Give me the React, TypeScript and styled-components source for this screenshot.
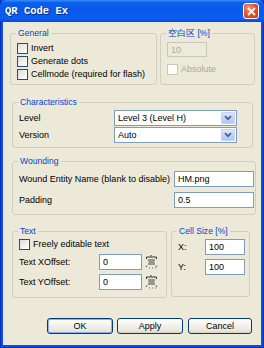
import React from 'react'
import styled, { createGlobalStyle, css } from 'styled-components'

const GlobalStyle = createGlobalStyle`
  html, body {
    margin: 0;
    padding: 0;
    background: #ffffff;
  }
  * {
    box-sizing: border-box;
  }
`

const uiFont = `"Liberation Sans", Arial, sans-serif`

const Window = styled.div`
  width: 264px;
  height: 348px;
  display: flex;
  flex-direction: column;
  background: #0a4ee4;
  border: 1px solid #0831b8;
  border-top: none;
  padding: 0 2px 2px;
  font-family: ${uiFont};
  font-size: 9px;
  color: #000;
`

const TitleBar = styled.div`
  height: 22px;
  margin: 0 -3px;
  padding: 0 5px;
  display: flex;
  align-items: center;
  justify-content: space-between;
  background: linear-gradient(
    180deg,
    #3c8cf8 0%,
    #0a5fee 12%,
    #0a58e8 45%,
    #0b5ef2 85%,
    #0848d8 100%
  );
  border-radius: 6px 6px 0 0;
`

const Title = styled.span`
  font-family: "Liberation Mono", "DejaVu Sans Mono", monospace;
  font-weight: bold;
  font-size: 10.5px;
  color: #ffffff;
  text-shadow: 1px 1px 0 #0a2a8a;
`

const CloseButton = styled.div`
  width: 16px;
  height: 16px;
  border: 1px solid #ffffff;
  border-radius: 3px;
  background: radial-gradient(circle at 35% 30%, #f39a7c 0%, #e2562f 45%, #c63a12 100%);
  display: flex;
  align-items: center;
  justify-content: center;
`

const Body = styled.div`
  flex: 1;
  background: #ece9d8;
  display: flex;
  flex-direction: column;
`

const Row = styled.div<{ $top: number; $left?: number }>`
  display: flex;
  margin-top: ${(p) => p.$top}px;
  margin-left: ${(p) => p.$left ?? 0}px;
`

const Group = styled.fieldset<{ $w: number; $h: number; $ml?: number }>`
  width: ${(p) => p.$w}px;
  height: ${(p) => p.$h}px;
  margin: 0 0 0 ${(p) => p.$ml ?? 0}px;
  padding: 0 0 0 6px;
  border: 1px solid #d0d0bf;
  border-radius: 3px;
  min-width: 0;
`

const Legend = styled.legend`
  padding: 0 2px;
  margin-left: -1px;
  color: #0046d5;
  line-height: 12px;
  font-size: 8.6px;
`

const Stack = styled.div<{ $pt: number; $gap: number }>`
  display: flex;
  flex-direction: column;
  padding-top: ${(p) => p.$pt}px;
  gap: ${(p) => p.$gap}px;
`

const CheckRow = styled.label<{ $disabled?: boolean }>`
  display: flex;
  align-items: center;
  height: 12px;
  gap: 3px;
  color: ${(p) => (p.$disabled ? '#aca899' : '#000')};
  white-space: nowrap;
`

const CheckBox = styled.span<{ $disabled?: boolean }>`
  width: 11px;
  height: 11px;
  flex: none;
  ${(p) =>
    p.$disabled
      ? css`
          border: 1px solid #cac8bb;
          background: #ffffff;
        `
      : css`
          border: 1px solid #1c5180;
          background: linear-gradient(135deg, #dcdcd7 0%, #f2f2ee 60%, #ffffff 100%);
        `}
`

const FieldRow = styled.div`
  display: flex;
  align-items: center;
  height: 16px;
`

const FieldLabel = styled.span<{ $w: number }>`
  width: ${(p) => p.$w}px;
  flex: none;
  white-space: nowrap;
`

const TextBox = styled.div<{ $w: number; $h?: number; $disabled?: boolean }>`
  width: ${(p) => p.$w}px;
  height: ${(p) => p.$h ?? 16}px;
  flex: none;
  border: 1px solid ${(p) => (p.$disabled ? '#c9c7ba' : '#7f9db9')};
  background: ${(p) => (p.$disabled ? '#ebeadb' : '#ffffff')};
  color: ${(p) => (p.$disabled ? '#aca899' : '#000')};
  padding-left: 3px;
  display: flex;
  align-items: center;
  white-space: nowrap;
  overflow: hidden;
`

const Combo = styled.div`
  width: 123px;
  height: 16px;
  flex: none;
  border: 1px solid #7f9db9;
  background: #ffffff;
  display: flex;
  align-items: center;
  padding: 0 1px 0 3px;
`

const ComboText = styled.span`
  flex: 1;
  white-space: nowrap;
`

const ComboButton = styled.span`
  width: 14px;
  height: 12px;
  border: 1px solid #c3d3fd;
  border-radius: 1px;
  background: linear-gradient(180deg, #dce6fe 0%, #c2d3fc 50%, #b4c8f6 100%);
  display: flex;
  align-items: center;
  justify-content: center;
`

const SpinGlyph = styled.svg`
  width: 13px;
  height: 16px;
  flex: none;
  margin-left: 3px;
`

const ButtonRow = styled.div`
  display: flex;
  justify-content: flex-end;
  gap: 4px;
  margin-top: 20px;
  padding-right: 9px;
`

const Button = styled.div<{ $default?: boolean; $w?: number }>`
  width: ${(p) => p.$w ?? 66}px;
  height: 16px;
  border: 1px solid #003c74;
  border-radius: 3px;
  background: linear-gradient(180deg, #ffffff 0%, #f4f3ee 40%, #e8e6dd 85%, #d6d0c5 100%);
  display: flex;
  align-items: center;
  justify-content: center;
  font-size: 9px;
  ${(p) =>
    p.$default &&
    css`
      box-shadow: inset 0 0 0 1px #8fb3f0;
    `}
`

const Chevron = () => (
  <svg width="8" height="6" viewBox="0 0 8 6">
    <path d="M1 1.2 L4 4.2 L7 1.2" fill="none" stroke="#4d6185" strokeWidth="1.8" />
  </svg>
)

// the offset spinners render as a garbled little up/down control in the original
const Spin = () => (
  <SpinGlyph viewBox="0 0 13 16">
    <path d="M6 1 v1.5 M1.5 3 h10 M1.5 3 v2 M11.5 3 v2" stroke="#333" strokeWidth="1" fill="none" />
    <path d="M3 6 h7 M3.5 8 h6 M3 10 h7 M2 11.5 l-1 1.5 M11 11.5 l1 1.5" stroke="#444" strokeWidth="1" fill="none" />
    <path d="M4 14 h1 M7 14 h1 M10 14 h1" stroke="#666" strokeWidth="1" />
  </SpinGlyph>
)

const App: React.FC = () => {
  return (
    <>
      <GlobalStyle />
      <Window>
        <TitleBar>
          <Title>QR Code Ex</Title>
          <CloseButton>
            <svg width="9" height="9" viewBox="0 0 9 9">
              <path d="M1 1 L8 8 M8 1 L1 8" stroke="#ffffff" strokeWidth="1.8" />
            </svg>
          </CloseButton>
        </TitleBar>

        <Body>
          <Row $top={5} $left={7}>
            <Group $w={147} $h={58}>
              <Legend>General</Legend>
              <Stack $pt={3} $gap={1}>
                <CheckRow>
                  <CheckBox />
                  Invert
                </CheckRow>
                <CheckRow>
                  <CheckBox />
                  Generate dots
                </CheckRow>
                <CheckRow>
                  <CheckBox />
                  Cellmode (required for flash)
                </CheckRow>
              </Stack>
            </Group>
            <Group $w={95} $h={58} $ml={3}>
              <Legend>空白区 [%]</Legend>
              <Stack $pt={3} $gap={6}>
                <TextBox $w={40} $h={15} $disabled>
                  10
                </TextBox>
                <CheckRow $disabled>
                  <CheckBox $disabled />
                  Absolute
                </CheckRow>
              </Stack>
            </Group>
          </Row>

          <Row $top={11} $left={9}>
            <Group $w={241} $h={52}>
              <Legend>Characteristics</Legend>
              <Stack $pt={2} $gap={1}>
                <FieldRow>
                  <FieldLabel $w={95}>Level</FieldLabel>
                  <Combo>
                    <ComboText>Level 3 (Level H)</ComboText>
                    <ComboButton>
                      <Chevron />
                    </ComboButton>
                  </Combo>
                </FieldRow>
                <FieldRow>
                  <FieldLabel $w={95}>Version</FieldLabel>
                  <Combo>
                    <ComboText>Auto</ComboText>
                    <ComboButton>
                      <Chevron />
                    </ComboButton>
                  </Combo>
                </FieldRow>
              </Stack>
            </Group>
          </Row>

          <Row $top={7} $left={9}>
            <Group $w={244} $h={60}>
              <Legend>Wounding</Legend>
              <Stack $pt={4} $gap={5}>
                <FieldRow>
                  <FieldLabel $w={155}>Wound Entity Name (blank to disable)</FieldLabel>
                  <TextBox $w={80}>HM.png</TextBox>
                </FieldRow>
                <FieldRow>
                  <FieldLabel $w={155}>Padding</FieldLabel>
                  <TextBox $w={80}>0.5</TextBox>
                </FieldRow>
              </Stack>
            </Group>
          </Row>

          <Row $top={10} $left={9}>
            <Group $w={155} $h={73}>
              <Legend>Text</Legend>
              <Stack $pt={1} $gap={4}>
                <CheckRow>
                  <CheckBox />
                  Freely editable text
                </CheckRow>
                <FieldRow>
                  <FieldLabel $w={80}>Text XOffset:</FieldLabel>
                  <TextBox $w={43}>0</TextBox>
                  <Spin />
                </FieldRow>
                <FieldRow>
                  <FieldLabel $w={80}>Text YOffset:</FieldLabel>
                  <TextBox $w={43}>0</TextBox>
                  <Spin />
                </FieldRow>
              </Stack>
            </Group>
            <Group $w={79} $h={72} $ml={4}>
              <Legend>Cell Size [%]</Legend>
              <Stack $pt={2} $gap={4}>
                <FieldRow>
                  <FieldLabel $w={27}>X:</FieldLabel>
                  <TextBox $w={40}>100</TextBox>
                </FieldRow>
                <FieldRow>
                  <FieldLabel $w={27}>Y:</FieldLabel>
                  <TextBox $w={40}>100</TextBox>
                </FieldRow>
              </Stack>
            </Group>
          </Row>

          <ButtonRow>
            <Button $default>OK</Button>
            <Button>Apply</Button>
            <Button $w={64} style={{ marginLeft: 1 }}>
              Cancel
            </Button>
          </ButtonRow>
        </Body>
      </Window>
    </>
  )
}

export default App
